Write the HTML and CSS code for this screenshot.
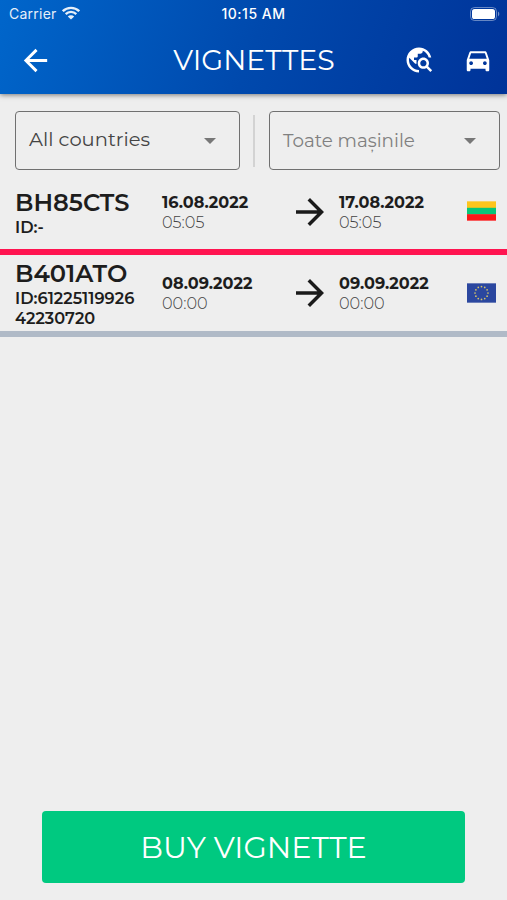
FILE: index.html
```html
<!DOCTYPE html>
<html lang="en">
<head>
    <meta charset="UTF-8">
    <meta name="viewport" content="width=device-width, initial-scale=1.0">
    <title>Vignettes</title>
    <link rel="stylesheet" href="styles.css">
</head>
<body>
    <header class="header">
        <div class="status-bar">
            <div class="carrier">
                <span>Carrier</span>
                <svg class="wifi" viewBox="0 0 18 14">
                    <path d="M0.8 5.2a11.6 11.6 0 0 1 16.4 0M3.7 8.1a7.5 7.5 0 0 1 10.6 0" fill="none" stroke="#fff" stroke-width="2.3"/>
                    <path d="M9 13.6L5.8 10.5a4.6 4.6 0 0 1 6.4 0z" fill="#fff"/>
                </svg>
            </div>
            <div class="clock">10:15 AM</div>
            <svg class="battery" viewBox="0 0 30 14">
                <rect x="0.5" y="0.5" width="26" height="13" rx="4" fill="none" stroke="#fff" stroke-opacity="0.4"/>
                <rect x="2" y="2" width="23" height="10" rx="2.6" fill="#fff"/>
                <path d="M28 4.6c1.8.8 1.8 4 0 4.8z" fill="#fff" fill-opacity="0.45"/>
            </svg>
        </div>
        <div class="title-bar">
            <svg class="back" viewBox="0 0 24 24"><path d="M20 11H7.83l5.59-5.59L12 4l-8 8 8 8 1.41-1.41L7.83 13H20v-2z"/></svg>
            <h1>VIGNETTES</h1>
            <div class="actions">
                <svg class="explore" viewBox="0 0 24 24"><path d="M19.3 16.9c.4-.7.7-1.5.7-2.4 0-2.5-2-4.5-4.5-4.5S11 12 11 14.5s2 4.5 4.5 4.5c.9 0 1.7-.3 2.4-.7l3.2 3.2 1.4-1.4-3.2-3.2zM15.5 17c-1.4 0-2.5-1.1-2.5-2.5s1.1-2.5 2.5-2.5 2.5 1.1 2.5 2.5-1.1 2.5-2.5 2.5zM12 20v2C6.48 22 2 17.52 2 12S6.48 2 12 2c4.84 0 8.87 3.44 9.8 8h-2.07c-.64-2.46-2.4-4.47-4.73-5.41V5c0 1.1-.9 2-2 2h-2v2c0 .55-.45 1-1 1H8v2h2v3H9l-4.79-4.79C4.08 10.79 4 11.38 4 12c0 4.41 3.59 8 8 8z"/></svg>
                <svg class="car" viewBox="0 0 24 24"><path d="M18.92 6.01C18.72 5.42 18.16 5 17.5 5h-11c-.66 0-1.21.42-1.42 1.01L3 12v8c0 .55.45 1 1 1h1c.55 0 1-.45 1-1v-1h12v1c0 .55.45 1 1 1h1c.55 0 1-.45 1-1v-8l-2.08-5.99zM6.5 16c-.83 0-1.5-.67-1.5-1.5S5.67 13 6.5 13s1.5.67 1.5 1.5S7.33 16 6.5 16zm11 0c-.83 0-1.5-.67-1.5-1.5s.67-1.5 1.5-1.5 1.5.67 1.5 1.5-.67 1.5-1.5 1.5zM5 11l1.5-4.5h11L19 11H5z"/></svg>
            </div>
        </div>
    </header>

    <div class="filters">
        <div class="select country">
            <span>All countries</span>
            <svg class="caret" viewBox="0 0 12 6"><path d="M0 0h12L6 6z"/></svg>
        </div>
        <div class="divider"></div>
        <div class="select cars">
            <span>Toate mașinile</span>
            <svg class="caret" viewBox="0 0 12 6"><path d="M0 0h12L6 6z"/></svg>
        </div>
    </div>

    <main class="list">
        <div class="row expired">
            <div class="plate">
                <h2>BH85CTS</h2>
                <p>ID:-</p>
            </div>
            <div class="date">
                <b>16.08.2022</b>
                <span>05:05</span>
            </div>
            <svg class="arrow" viewBox="0 0 24 24"><path d="M12 4l-1.41 1.41L16.17 11H4v2h12.17l-5.58 5.59L12 20l8-8z"/></svg>
            <div class="date">
                <b>17.08.2022</b>
                <span>05:05</span>
            </div>
            <svg class="flag" viewBox="0 0 30 20">
                <rect width="30" height="7" fill="#fdc51d"/>
                <rect y="6.7" width="30" height="7" fill="#07c679"/>
                <rect y="13.3" width="30" height="6.7" fill="#fb1718"/>
            </svg>
        </div>
        <div class="row">
            <div class="plate">
                <h2>B401ATO</h2>
                <p>ID:61225119926<br>42230720</p>
            </div>
            <div class="date">
                <b>08.09.2022</b>
                <span>00:00</span>
            </div>
            <svg class="arrow" viewBox="0 0 24 24"><path d="M12 4l-1.41 1.41L16.17 11H4v2h12.17l-5.58 5.59L12 20l8-8z"/></svg>
            <div class="date">
                <b>09.09.2022</b>
                <span>00:00</span>
            </div>
            <svg class="flag" viewBox="0 0 30 20">
                <rect width="30" height="20" fill="#2b479f"/>
                <g fill="#d3c269">
                    <circle cx="15" cy="3.3" r="0.9"/>
                    <circle cx="18.35" cy="4.2" r="0.9"/>
                    <circle cx="20.8" cy="6.65" r="0.9"/>
                    <circle cx="21.7" cy="10" r="0.9"/>
                    <circle cx="20.8" cy="13.35" r="0.9"/>
                    <circle cx="18.35" cy="15.8" r="0.9"/>
                    <circle cx="15" cy="16.7" r="0.9"/>
                    <circle cx="11.65" cy="15.8" r="0.9"/>
                    <circle cx="9.2" cy="13.35" r="0.9"/>
                    <circle cx="8.3" cy="10" r="0.9"/>
                    <circle cx="9.2" cy="6.65" r="0.9"/>
                    <circle cx="11.65" cy="4.2" r="0.9"/>
                </g>
            </svg>
        </div>
    </main>

    <button class="buy" type="button">BUY VIGNETTE</button>
</body>
</html>
```
FILE: styles.css
```css
* {
    box-sizing: border-box;
}
body {
    font-family: Montserrat, Inter, sans-serif;
    background-color: #eee;
    color: #1d1d1d;
    margin: 0;
    height: 900px;
    display: flex;
    flex-direction: column;
    overflow: hidden;
}
h1, h2, p {
    margin: 0;
}
svg {
    display: block;
    flex: none;
}
.header {
    height: 94px;
    flex: none;
    color: #fff;
    background: linear-gradient(110deg, #0066cb 0%, #0049ad 50%, #003399 100%);
    box-shadow: 0 1px 5px rgba(0, 0, 0, 0.5);
}
.status-bar {
    height: 27px;
    padding: 0 7px 0 9px;
    display: grid;
    grid-template-columns: 1fr auto 1fr;
    align-items: center;
    font-family: Inter, sans-serif;
    font-size: 14px;
}
.carrier {
    display: flex;
    align-items: center;
    gap: 5px;
    opacity: 0.9;
    letter-spacing: 0.25px;
}
.wifi {
    width: 18px;
    height: 14px;
    margin-top: -1px;
}
.clock {
    font-size: 14px;
    font-weight: 550;
    letter-spacing: 0.5px;
    margin-right: 2px;
}
.battery {
    width: 30px;
    height: 14px;
    justify-self: end;
}
.title-bar {
    height: 66px;
    padding: 0 14px 0 18px;
    display: grid;
    grid-template-columns: 1fr auto 1fr;
    align-items: center;
    fill: #fff;
}
.back {
    width: 35px;
    height: 35px;
}
h1 {
    font-size: 28.4px;
    font-weight: 400;
    padding: 0 3px 1px 0;
}
.actions {
    display: flex;
    align-items: center;
    justify-content: flex-end;
    gap: 29px;
}
.explore, .car {
    width: 30px;
    height: 30px;
}
.filters {
    display: flex;
    align-items: center;
    flex: none;
    padding: 17px 7px 5px 15px;
}
.select {
    height: 59px;
    border: 1.5px solid #707070;
    border-radius: 4px;
    display: flex;
    align-items: center;
    justify-content: space-between;
}
.country {
    width: 225px;
    padding: 0 23px 4px 13px;
    font-size: 19.5px;
    color: #444;
}
.cars {
    flex: 1;
    padding: 0 23px 0 13px;
    font-size: 18.3px;
    color: #808080;
}
.caret {
    width: 12px;
    height: 6px;
    fill: #777;
}
.country .caret {
    margin-top: 5px;
}
.divider {
    width: 2px;
    height: 52px;
    margin: 0 14px 0 13px;
    background-color: #d3d3d3;
}
.row {
    height: 81.5px;
    padding: 0 11px 0 15px;
    border-bottom: 6px solid #b0bac7;
    display: grid;
    grid-template-columns: 147px 127px 50px 1fr 29px;
    align-items: center;
}
.row.expired {
    height: 80px;
    border-bottom-color: #ff1450;
}
.plate {
    padding-top: 2px;
}
.plate h2 {
    font-size: 24.2px;
    font-weight: 600;
    line-height: 28px;
}
.plate p {
    font-size: 16.2px;
    font-weight: 600;
    line-height: 20px;
}
.date {
    padding-top: 1px;
}
.expired .date {
    padding-top: 0;
    padding-bottom: 1px;
}
.date b, .date span {
    display: block;
    font-size: 16.1px;
    line-height: 20px;
}
.date b {
    font-weight: 700;
}
.date span {
    color: #444;
    font-weight: 300;
}
.arrow {
    width: 42px;
    height: 42px;
    fill: #1a1a1a;
}
.flag {
    width: 29px;
    height: 20px;
}
.expired .flag {
    margin-bottom: 2px;
}
.buy {
    width: 423px;
    height: 72px;
    margin: auto auto 17px;
    padding: 0;
    border: none;
    border-radius: 4px;
    background-color: #00c980;
    color: #fff;
    font-family: inherit;
    font-size: 30.2px;
    cursor: pointer;
}
```
